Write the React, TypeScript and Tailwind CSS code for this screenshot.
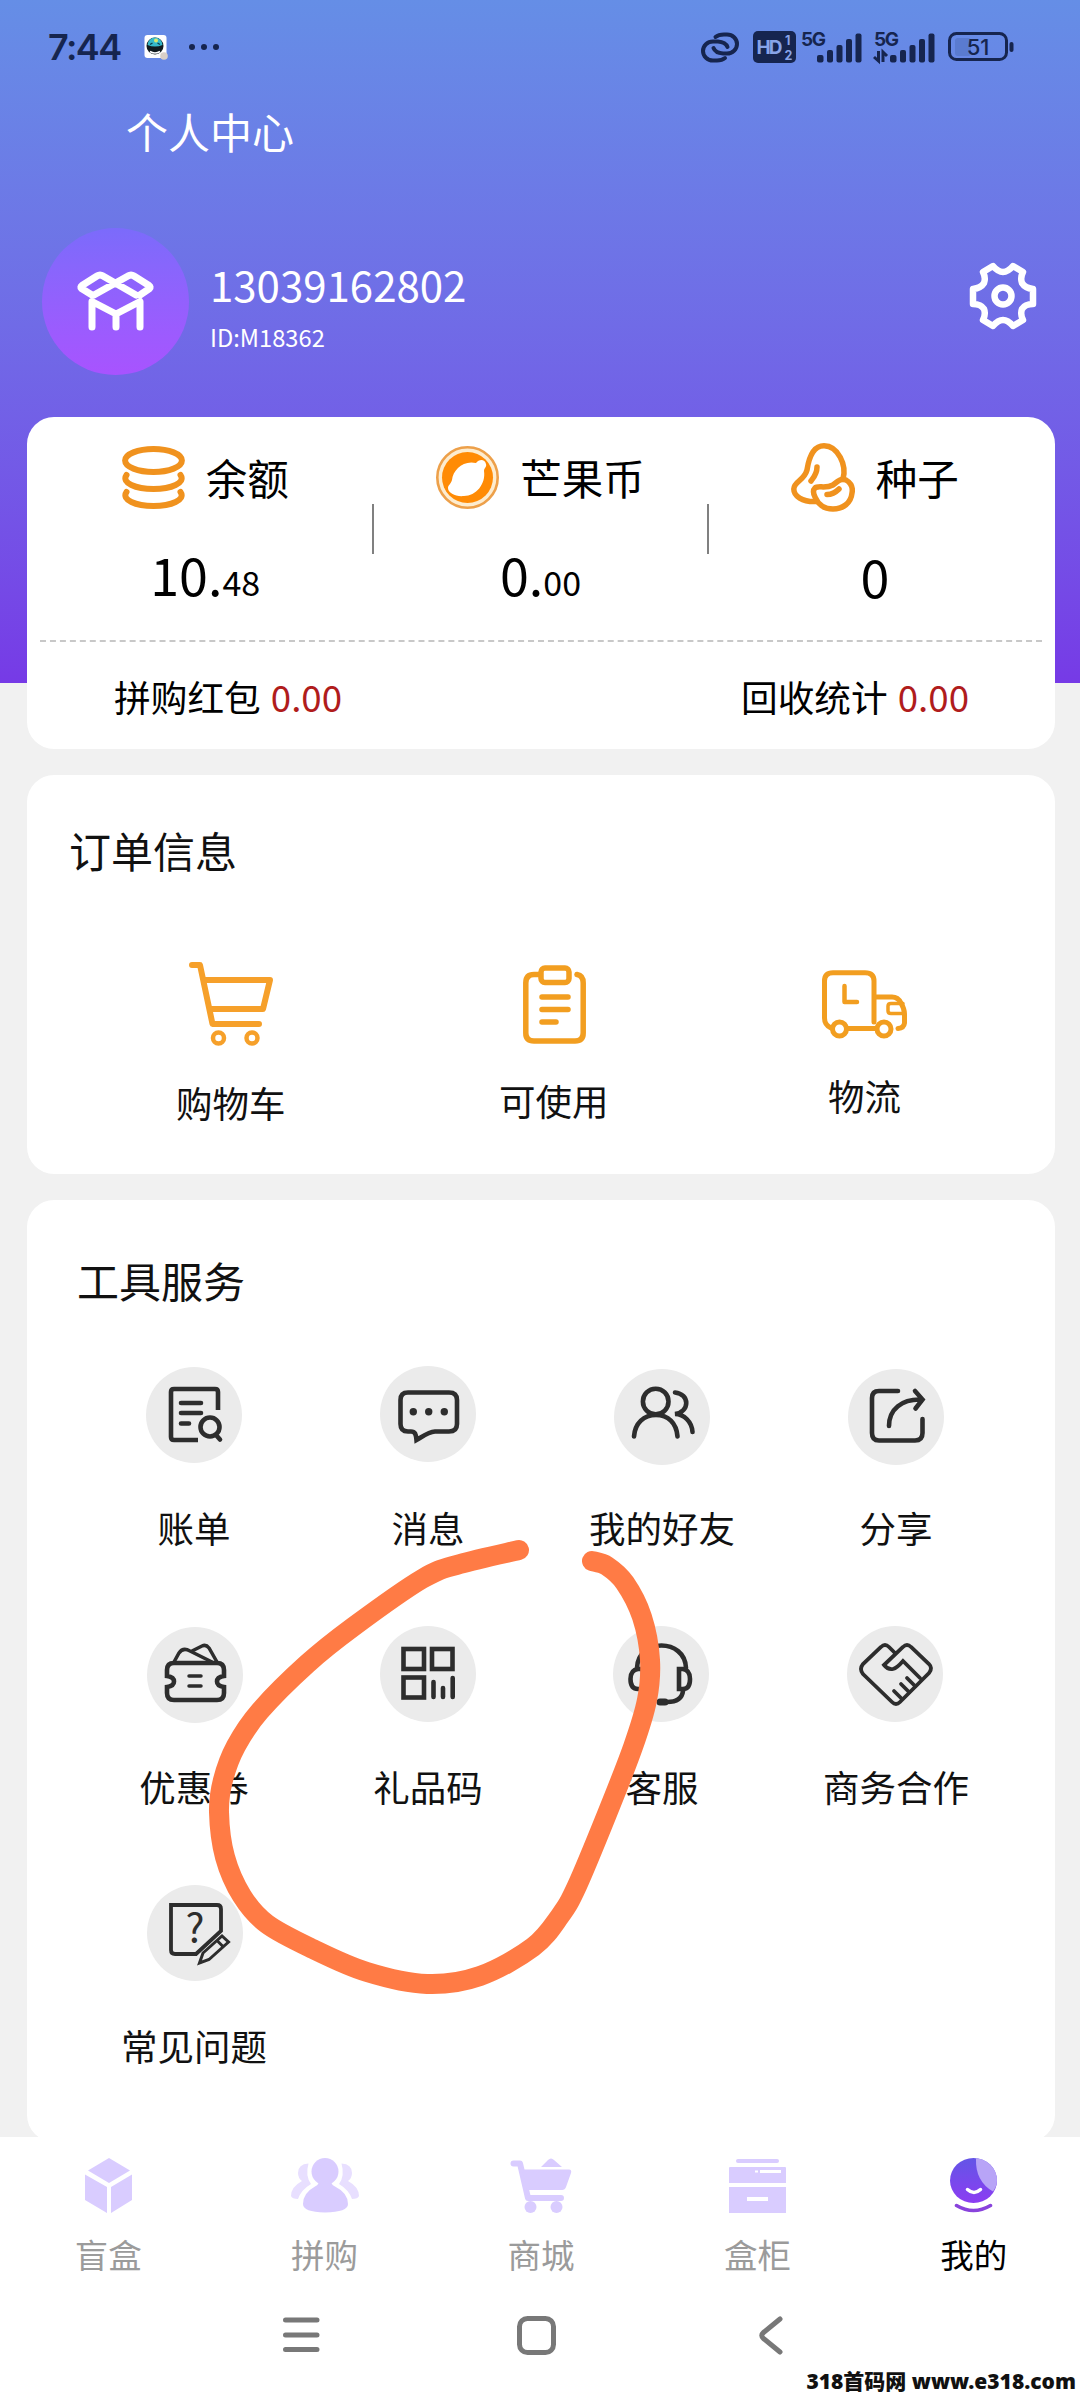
import type { ReactNode } from "react";

function LinkIcon() {
  return (
    <svg width="41" height="31" viewBox="0 0 41 31" fill="none" stroke="#16254f" strokeWidth="4" strokeLinecap="round">
      <path d="M15.500 5 Q18.500 2.500 24 2.500 H27 A10 9.500 0 0 1 27 21.500 H23 Q15.500 21 13.500 16" />
      <path d="M25 26 Q22 28.500 17 28.500 H13 A10 9.500 0 0 1 13 9.500 H18 Q25.500 10 27.500 15" />
    </svg>
  );
}

function Signal({ data }: { data?: boolean }) {
  return (
    <svg className="overflow-visible" width="61" height="32" viewBox="0 0 61 32" fill="#16254f">
      <text x="0" y="15" fontSize="19" fontWeight="700" fontFamily="Inter, sans-serif" textLength="25">5G</text>
      <rect x="16" y="24" width="6.500" height="7.500" rx="2" />
      <rect x="26" y="19" width="6" height="12.500" rx="2" />
      <rect x="35.500" y="14" width="6" height="17.500" rx="2" />
      <rect x="45" y="8" width="6" height="23.500" rx="2" />
      <rect x="54.500" y="2.500" width="6" height="29" rx="2" />
      {data && <path d="M4.500 20 V30 L0 26 M9 31 V21 L13 25" fill="none" stroke="#16254f" strokeWidth="3" />}
    </svg>
  );
}

function StatusBar() {
  return (
    <div className="flex h-[94px] items-center pr-[66px] pl-[48px] text-[#16254f]">
      <span className="w-[96px] font-['Inter'] text-[36px] leading-none font-semibold tracking-[-1.600px]">7:44</span>
      <svg width="24" height="26" viewBox="0 0 24 26">
        <rect x="0.500" y="1" width="22" height="23" rx="3" fill="#fff" />
        <circle cx="11" cy="12" r="8.500" fill="#111b1f" />
        <path d="M3.500 11 A7.500 7.500 0 0 1 18.500 11 Q11 14 3.500 11Z" fill="#35b9c9" />
        <circle cx="12" cy="6.500" r="2" fill="#d9e86b" />
        <path d="M6 10.500 L8.500 9 M13.500 9 L16 10.500" stroke="#0c3e4d" strokeWidth="1.300" />
        <path d="M6 17.500 Q11 20.500 16 17.500" stroke="#fff" strokeWidth="1.500" fill="none" />
        <circle cx="20" cy="22" r="3.800" fill="#d8cfc8" />
      </svg>
      <div className="ml-[21px] flex gap-[6px]">
        <i className="h-1.5 w-1.5 rounded-full bg-[#16254f]" />
        <i className="h-1.5 w-1.5 rounded-full bg-[#16254f]" />
        <i className="h-1.5 w-1.5 rounded-full bg-[#16254f]" />
      </div>
      <div className="ml-auto flex items-center">
        <LinkIcon />
        <svg className="mr-[5px] ml-3 overflow-visible" width="43" height="32" viewBox="0 0 43 32" fontFamily="Inter, sans-serif" fontWeight="700">
          <rect width="43" height="32" rx="5" fill="#16254f" />
          <g fill="#88a4e8">
            <text x="3.500" y="23" fontSize="19" textLength="26">HD</text>
            <text x="32" y="13.500" fontSize="12.500">1</text>
            <text x="31.500" y="29" fontSize="12.500">2</text>
          </g>
        </svg>
        <Signal />
        <div className="w-3" />
        <Signal data />
        <svg className="ml-[13px]" width="66" height="30" viewBox="0 0 66 30">
          <rect x="7" y="6" width="16" height="18" rx="3" fill="#5a7bd0" />
          <rect x="1.500" y="1.500" width="57" height="26" rx="7" fill="none" stroke="#16254f" strokeWidth="3" />
          <rect x="61.500" y="10" width="4" height="10" rx="2" fill="#16254f" />
          <text x="30" y="22.500" textAnchor="middle" fontSize="22" fontWeight="500" fontFamily="Inter, sans-serif" fill="#16254f">51</text>
        </svg>
      </div>
    </div>
  );
}

function BoxLogo() {
  return (
    <svg width="147" height="147" viewBox="0 0 147 147" fill="none" stroke="#fff" strokeWidth="7" strokeLinecap="round" strokeLinejoin="round">
      <path d="M50 67 L39.500 60.500 Q38 59 40 57.500 L55 48 Q58 46 61 48 L94 67 M98 67 L107.500 60.500 Q109 59 107 57.500 L92 48 Q89 46 86 48 L52 67" />
      <path d="M50 99 V73.500 L74 86 L98 73.500 V99 M74 87 V99" />
    </svg>
  );
}

function GearIcon() {
  return (
    <svg width="68" height="68" viewBox="0 0 68 68" fill="none" stroke="#fff" strokeWidth="6.500" strokeLinejoin="round">
      <path d="M24 4 Q29 10 34 10 Q39 10 44 4 L54 10 Q51 16 53 21 Q56 26 64 27 V42 Q56 42 53 47 Q51 52 54 58 L44 64 Q39 58 34 58 Q29 58 24 64 L14 58 Q17 52 15 47 Q12 42 4 42 V27 Q12 26 15 21 Q17 16 14 10 Z" />
      <circle cx="34" cy="34" r="8.500" />
    </svg>
  );
}

function CoinsIcon() {
  return (
    <svg width="63" height="63" viewBox="0 0 63 63" fill="none" stroke="#f0921e" strokeWidth="6" strokeLinecap="round">
      <ellipse cx="31.500" cy="14.500" rx="28.400" ry="11.500" />
      <path d="M4.500 29 C-1 37 14 43 31.500 43 S64 37 58.500 29" />
      <path d="M4.500 46 C-1 54 14 60 31.500 60 S64 54 58.500 46" />
    </svg>
  );
}

function MangoCoinIcon() {
  return (
    <svg width="63" height="63" viewBox="0 0 63 63">
      <circle cx="31.500" cy="31.500" r="30.200" fill="#fdeccf" stroke="#eda04a" strokeWidth="2.600" />
      <circle cx="31.500" cy="31.500" r="25.500" fill="#ff8b05" />
      <path d="M40 17 C43 13 49 13 50 18 C51 21 48 22 48 25 C50 38 40 50 28 50 C20 51 12 47 12 42 C12 39 15 38 16 34 C17 24 27 14 40 17Z" fill="#fff" />
    </svg>
  );
}

function SeedsIcon() {
  return (
    <svg width="64" height="69" viewBox="0 0 64 69" fill="none" stroke="#f0921e" strokeWidth="5.500" strokeLinecap="round">
      <path d="M25 58.500 C11 59 2.800 53 2.800 46 C3 38 13 38 16 27 C18 14 22 2.800 33 2.800 C47 3 56 22 52 36" />
      <path d="M24 45 C27 42 34 46 42 42 C47 38 50 35 55 37 C60 40 62 45 61 50 C60 60 52 66 42 66 C33 66 27 61 24 54 C22 50 22 47 24 45Z" />
      <path d="M26 24 C26 31 23 34 20 38 M36 51.500 C42 51.500 45 49 48 46" />
    </svg>
  );
}

function CartIcon() {
  return (
    <svg width="84" height="84" viewBox="0 0 84 84" fill="none" stroke="#f6a02a" strokeWidth="6" strokeLinecap="round" strokeLinejoin="round">
      <path d="M3 3 H11 L23.500 62 H70 M15 18 H81 L74 47 H21" />
      <circle cx="29.500" cy="76" r="5.500" strokeWidth="4.500" />
      <circle cx="63" cy="76" r="5.500" strokeWidth="4.500" />
    </svg>
  );
}

function ClipboardIcon() {
  return (
    <svg className="translate-x-px" width="63" height="79" viewBox="0 0 63 79" fill="none" stroke="#f29e20" strokeWidth="5.500" strokeLinecap="round">
      <path d="M16 9.500 H11 Q2.800 9.500 2.800 18 V68 Q2.800 76 11 76 H52 Q60.200 76 60.200 68 V18 Q60.200 10.500 54 9.500" />
      <rect x="18" y="3" width="28" height="14.500" rx="4" />
      <path d="M19 32 H45 M19 44.500 H45 M19 57 H33" />
    </svg>
  );
}

function TruckIcon() {
  return (
    <svg width="85" height="69" viewBox="0 0 85 69" fill="none" stroke="#f29e20" strokeWidth="5" strokeLinecap="round" strokeLinejoin="round">
      <path d="M9 58 Q2.500 55 2.500 48 V11 Q2.500 2.700 11 2.700 H43 Q52 2.700 52 11 V52 M26 58.500 H53" />
      <circle cx="17.500" cy="59" r="7" />
      <circle cx="62" cy="59" r="7" />
      <path d="M53 27 H70 Q76 27 79 33 Q82.500 39 82.500 44 V53 Q82 58 76 58.500" />
      <path d="M81 33.500 H69 Q66 33.500 66 36 V41 Q66 43.500 69 43.500 H82" strokeWidth="3.500" />
      <path d="M22.500 16 V32 H35" strokeWidth="4.500" />
    </svg>
  );
}

const stats = [
  { icon: <CoinsIcon />, label: "余额", whole: "10.", fraction: "48", valueClass: "mt-[35px]" },
  { icon: <MangoCoinIcon />, label: "芒果币", whole: "0.", fraction: "00", valueClass: "mt-[35px]" },
  { icon: <SeedsIcon />, label: "种子", whole: "0", fraction: "", valueClass: "mt-[37px]" },
];

const orders = [
  { icon: <CartIcon />, label: "购物车" },
  { icon: <ClipboardIcon />, label: "可使用" },
  { icon: <TruckIcon />, label: "物流" },
];

const tools: { label: string; nudge?: string; icon: ReactNode }[] = [
  {
    label: "账单",
    icon: (
      <>
        <path d="M72 43 V25 Q72 22 69 22 H28 Q25 22 25 25 V70 Q25 73 28 73 H52" strokeLinecap="butt" />
        <path d="M35 36 H55 M35 46 H55 M35 56.500 H43" />
        <circle cx="64" cy="60" r="9.500" />
        <path d="M70 68 L74 72.500" />
      </>
    ),
  },
  {
    label: "消息",
    nudge: "-translate-y-px",
    icon: (
      <>
        <path d="M28 26.500 H69 Q77 26.500 77 34 V58 Q77 65.500 69 65.500 H55 C48 66 42 71 36.500 74 C36 68 35 65.500 31 65.500 H28 Q20.500 65.500 20.500 58 V34 Q20.500 26.500 28 26.500Z" />
        <g fill="#2d2d2d" stroke="none">
          <circle cx="33.300" cy="45.700" r="3.700" />
          <circle cx="48.700" cy="45.700" r="3.700" />
          <circle cx="64.300" cy="45.700" r="3.700" />
        </g>
      </>
    ),
  },
  {
    label: "我的好友",
    nudge: "translate-y-0.5",
    icon: (
      <>
        <circle cx="41.700" cy="32.500" r="12.800" />
        <path d="M20 67.500 C21 54 30 46 42 46 S62.500 54 63.500 67.500" />
        <path d="M61 23.500 C76 25 76 43 61 45 C70 45 78 53 78.500 63" />
      </>
    ),
  },
  {
    label: "分享",
    nudge: "translate-y-0.5",
    icon: (
      <>
        <path d="M50 22 H31 Q24 22 24 29 V64 Q24 71.500 31 71.500 H67 Q74.500 71.500 74.500 64 V50" />
        <path d="M41 57 C41 40 54 30 73 30.500 M67 22 L74.500 30.500 L67.500 39.500" />
      </>
    ),
  },
  {
    label: "优惠券",
    nudge: "translate-x-px translate-y-px",
    icon: (
      <>
        <path d="M27 36 H70 Q77 36 77 43 V49 Q70 50 70 54.500 Q70 59 77 60 V66 Q77 73 70 73 H27 Q20 73 20 66 V60 Q27 59 27 54.500 Q27 50 20 49 V43 Q20 36 27 36Z" />
        <path d="M27 35 L32 26 Q36 20 43 24 L65 35 M45 24 L55 19 Q59 17 62 21 L70 35" strokeWidth="3.500" />
        <path d="M42 49 H54 M42 59 H54" strokeWidth="3.500" />
      </>
    ),
  },
  {
    label: "礼品码",
    icon: (
      <>
        <rect x="23.500" y="23" width="20.500" height="20" />
        <rect x="52" y="23" width="20.500" height="20" />
        <rect x="23.500" y="51.500" width="20.500" height="20" />
        <path d="M53.500 56 V71 M63 62 V71 M72.700 52 V71" />
      </>
    ),
  },
  {
    label: "客服",
    nudge: "-translate-x-px",
    icon: (
      <>
        <path d="M24 42 C25 12 72 12 73 42" />
        <path d="M66 43 H70 Q77 44 77 53 Q77 63 70 63 H66Z M30 43 H25 Q17.500 44 17.500 53 Q17.500 63 25 63 H30Z" />
        <path d="M70 65 C69 73 63 76 54 76" />
        <path d="M47 76 H52" strokeWidth="7" />
      </>
    ),
  },
  {
    label: "商务合作",
    nudge: "-translate-x-px",
    icon: (
      <g strokeWidth="3.800">
        <path d="M48 27 L42 21 Q38 17 34 21 L16 38 Q12 43 16 48 L45 76 Q49 80 53 76 L82 47 Q86 42 82 38 L64 21 Q60 17 56 21 L37 39 Q41 44 46 43 Q50 42 56 35 L73 52" />
        <path d="M47 65 L55 73 M54 58 L62 66 M60 52 L68 60" />
      </g>
    ),
  },
  {
    label: "常见问题",
    nudge: "translate-x-px",
    icon: (
      <g strokeWidth="3.800">
        <path d="M74 46 V24 Q74 20 70 20 H24 V65 Q24 69 28 69 H49 Z" />
        <path d="M52.500 78 L56 68 L75 51 L81.500 57 L62 74.500 Z M70 55.500 L76 61.500" strokeWidth="3" />
        <text x="48" y="57" textAnchor="middle" fontSize="40" fill="#2d2d2d" stroke="none">?</text>
      </g>
    ),
  },
];

const tabs = [
  {
    label: "盲盒",
    icon: (
      <svg width="47" height="55" viewBox="0 0 47 55" fill="#d9ccff">
        <path d="M24 0 L45 12.500 L24 25 L3 12.500Z M0 16.500 L22 29 V55 L0 42Z M26 29 L47 16.500 V42 L26 55Z" />
      </svg>
    ),
  },
  {
    label: "拼购",
    icon: (
      <svg width="68" height="55" viewBox="0 0 68 55" fill="#d9ccff">
        <path d="M17.500 5.500 Q7 6 7 15 Q7 20 11 23 Q0 29 0 38 Q1 41 7 41 Q10 32 20 26 Q14 18 17.500 5.500Z" fill="#e8dfff" />
        <path d="M50.500 5.500 Q61 6 61 15 Q61 20 57 23 Q68 29 68 38 Q67 41 61 41 Q58 32 48 26 Q54 18 50.500 5.500Z" fill="#e8dfff" />
        <circle cx="34" cy="13.500" r="13.500" />
        <path d="M27 22 Q29 26 24 28.500 Q12 35 12 46 Q12 54 34 54.500 Q57 54 57 46 Q57 35 44 28.500 Q39 26 41 22Z" />
      </svg>
    ),
  },
  {
    label: "商城",
    icon: (
      <svg width="62" height="55" viewBox="0 0 62 55" fill="#d9ccff">
        <path d="M3.500 5.500 H10 L18 40 H51" fill="none" stroke="#d9ccff" strokeWidth="6" strokeLinecap="round" strokeLinejoin="round" />
        <path d="M12 11.500 H59 Q62 11.500 61 15 L56 29 Q55 32 52 32 H17Z" />
        <path d="M31 9 L38 2 Q41 -1 44 2 L52 9Z" />
        <circle cx="20.500" cy="49" r="6" />
        <circle cx="46.500" cy="49" r="6" />
      </svg>
    ),
  },
  {
    label: "盒柜",
    icon: (
      <svg width="57" height="55" viewBox="0 0 57 55" fill="#d9ccff">
        <rect x="7" y="1" width="43" height="4" rx="2" />
        <path d="M0 10 Q0 9 1 9 H56 Q57 9 57 10 V25 H0Z M0 29 H57 V55 H0Z" />
        <path d="M26 12.500 H29 V14.500 H26Z M31 12 H52 V15 H31Z M18 39 H39 V43 H18Z" fill="#fff" />
      </svg>
    ),
  },
  {
    label: "我的",
    active: true,
    icon: (
      <svg width="47" height="55" viewBox="0 0 47 55">
        <defs>
          <linearGradient id="face" x1="0" y1="0" x2="0" y2="1">
            <stop offset="0" stopColor="#6355e6" />
            <stop offset="1" stopColor="#8c3df2" />
          </linearGradient>
        </defs>
        <ellipse cx="23.500" cy="22.500" rx="23.500" ry="22.500" fill="url(#face)" />
        <path d="M26 0.200 C38 1 47 11 47 22.500 Q47 28 43 33.500 Q25 23 26 0.200Z" fill="#b8a4f7" />
        <path d="M17.500 31.500 Q24 37.500 30.500 31.500" fill="none" stroke="#fff" strokeWidth="3.500" strokeLinecap="round" />
        <path d="M6.500 47.500 Q23.500 57.500 40.500 47.500" fill="none" stroke="#8943dc" strokeWidth="3.500" strokeLinecap="round" />
      </svg>
    ),
  },
];

// Freehand marker stroke, page coordinates
const marker: [number, number][] = [
  [519, 1550], [460, 1564], [422, 1579], [353, 1627], [307, 1664], [260, 1711],
  [236, 1746], [223, 1780], [219, 1812], [225, 1857], [242, 1896], [267, 1924],
  [313, 1949], [367, 1972], [427, 1984], [480, 1976], [533, 1947], [560, 1916],
  [577, 1886], [607, 1814], [633, 1747], [647, 1700], [650, 1660], [642, 1617],
  [625, 1583], [607, 1566], [592, 1561],
];

function smooth(points: [number, number][]) {
  let d = `M${points[0][0]} ${points[0][1]}`;
  for (let i = 0; i < points.length - 1; i++) {
    const p0 = points[i - 1] ?? points[i];
    const p1 = points[i];
    const p2 = points[i + 1];
    const p3 = points[i + 2] ?? p2;
    d += ` C${p1[0] + (p2[0] - p0[0]) / 6} ${p1[1] + (p2[1] - p0[1]) / 6} ${p2[0] - (p3[0] - p1[0]) / 6} ${p2[1] - (p3[1] - p1[1]) / 6} ${p2[0]} ${p2[1]}`;
  }
  return d;
}

function Header() {
  return (
    <header className="h-[683px] bg-gradient-to-b from-[#658ee6] to-[#763ae6] text-white">
      <StatusBar />
      <h1 className="mt-[7px] pl-[126px] text-[42px] leading-[60px]">个人中心</h1>
      <div className="mt-[67px] flex items-start pr-[43px] pl-[42px]">
        <div className="h-[147px] w-[147px] rounded-full bg-gradient-to-b from-[#7b6bfb] to-[#a853ff]">
          <BoxLogo />
        </div>
        <div className="ml-[21px] pt-[31px]">
          <div className="text-[42px] leading-[50px]">13039162802</div>
          <div className="mt-[13px] text-[23.700px] leading-[30px]">ID:M18362</div>
        </div>
        <div className="mt-[34px] ml-auto">
          <GearIcon />
        </div>
      </div>
    </header>
  );
}

function Wallet() {
  return (
    <section className="relative mx-[27px] -mt-[266px] h-[332px] w-[1028px] rounded-[27px] bg-white px-[13px] text-black">
      <div className="-ml-0.5 flex h-[223px] w-[1003px]">
        {stats.map((s, i) => (
          <div key={s.label} className="flex flex-1">
            {i > 0 && <div className="mt-[87px] h-[50px] w-0.5 bg-[#808080]" />}
            <div className="flex flex-1 flex-col items-center pt-[29px]">
              <div className="flex h-[63px] items-center gap-[21px]">
                {s.icon}
                <span className="-mt-[2px] text-[41.500px] leading-[60px]">{s.label}</span>
              </div>
              <div className={`text-[52px] leading-[60px] ${s.valueClass}`}>
                {s.whole}
                <span className="text-[34px] leading-none">{s.fraction}</span>
              </div>
            </div>
          </div>
        ))}
      </div>
      <div className="flex justify-between border-t-2 border-dashed border-[#c8c8c8] pt-[34px] pr-[73px] pl-[74px] text-[36.700px] leading-[40px]">
        <div className="flex gap-[10px]">
          拼购红包 <span className="text-[#b01c1c]">0.00</span>
        </div>
        <div className="flex gap-[10px]">
          回收统计 <span className="text-[#b01c1c]">0.00</span>
        </div>
      </div>
    </section>
  );
}

export default function App() {
  return (
    <div className="relative h-[2400px] w-[1080px] overflow-hidden bg-[#f1f1f1] font-['Noto_Sans_CJK_SC',sans-serif] text-[#111]">
      <Header />
      <Wallet />

      {/* Orders */}
      <section className="mx-[27px] mt-[26px] h-[399px] w-[1028px] rounded-[27px] bg-white pt-[45px]">
        <h2 className="pl-[42px] text-[42px] leading-[60px]">订单信息</h2>
        <div className="mt-[82px] flex items-center justify-between pr-[148px] pl-[149px]">
          {orders.map((o) => (
            <div key={o.label} className="flex flex-col items-center gap-9">
              {o.icon}
              <span className="translate-y-px text-[36.500px] leading-[40px]">{o.label}</span>
            </div>
          ))}
        </div>
      </section>

      {/* Tools */}
      <section className="mx-[27px] mt-[26px] h-[942px] w-[1028px] rounded-[27px] bg-white pt-[50px]">
        <h2 className="pl-[50px] text-[42px] leading-[60px]">工具服务</h2>
        <div className="mt-[57px] grid auto-rows-[259px] grid-cols-[repeat(4,234px)] pl-[50px]">
          {tools.map((t) => (
            <div key={t.label} className="flex flex-col items-center gap-[45px]">
              <div className={`h-[96px] w-[96px] rounded-full bg-[#ebebeb] ${t.nudge ?? ""}`}>
                <svg width="96" height="96" viewBox="0 0 96 96" fill="none" stroke="#2d2d2d" strokeWidth="4.600" strokeLinecap="round">
                  {t.icon}
                </svg>
              </div>
              <span className="text-[36.500px] leading-[40px]">{t.label}</span>
            </div>
          ))}
        </div>
      </section>

      {/* Tab bar and system navigation */}
      <footer className="relative -mt-[5px] h-[263px] bg-white pt-[21px]">
        <nav className="grid w-[1082px] grid-cols-5">
          {tabs.map((t) => (
            <div key={t.label} className="flex flex-col items-center gap-[21px]">
              {t.icon}
              <span className={`text-[33.500px] leading-[40px] ${t.active ? "text-black" : "text-[#9b9b9b]"}`}>{t.label}</span>
            </div>
          ))}
        </nav>
        <div className="flex h-[122px] items-center pl-[283px]">
          <svg width="37" height="38" viewBox="0 0 37 38" stroke="#787878" strokeWidth="5" strokeLinecap="round">
            <path d="M2.500 4 H34 M2.500 19 H34 M2.500 33.500 H34" />
          </svg>
          <svg className="ml-[197px]" width="39" height="39" viewBox="0 0 39 39" fill="none" stroke="#787878" strokeWidth="5">
            <rect x="2.500" y="2.500" width="34" height="34" rx="8" />
          </svg>
          <svg className="ml-[203px]" width="24" height="39" viewBox="0 0 24 39" fill="none" stroke="#787878" strokeWidth="5" strokeLinecap="round">
            <path d="M21 3 L4.500 16.500 Q1 19.500 4.500 22.500 L21 36" />
          </svg>
        </div>
      </footer>

      <svg className="absolute top-0 left-0" width="1080" height="2400" fill="none" stroke="#ff7b45" strokeWidth="20" strokeLinecap="round">
        <path d={smooth(marker)} />
      </svg>
      <div className="absolute right-1 bottom-[7px] font-['Noto_Sans','Noto_Sans_CJK_SC',sans-serif] text-[21px] leading-[24px] font-black whitespace-nowrap">
        318首码网 www.e318.com
      </div>
    </div>
  );
}
